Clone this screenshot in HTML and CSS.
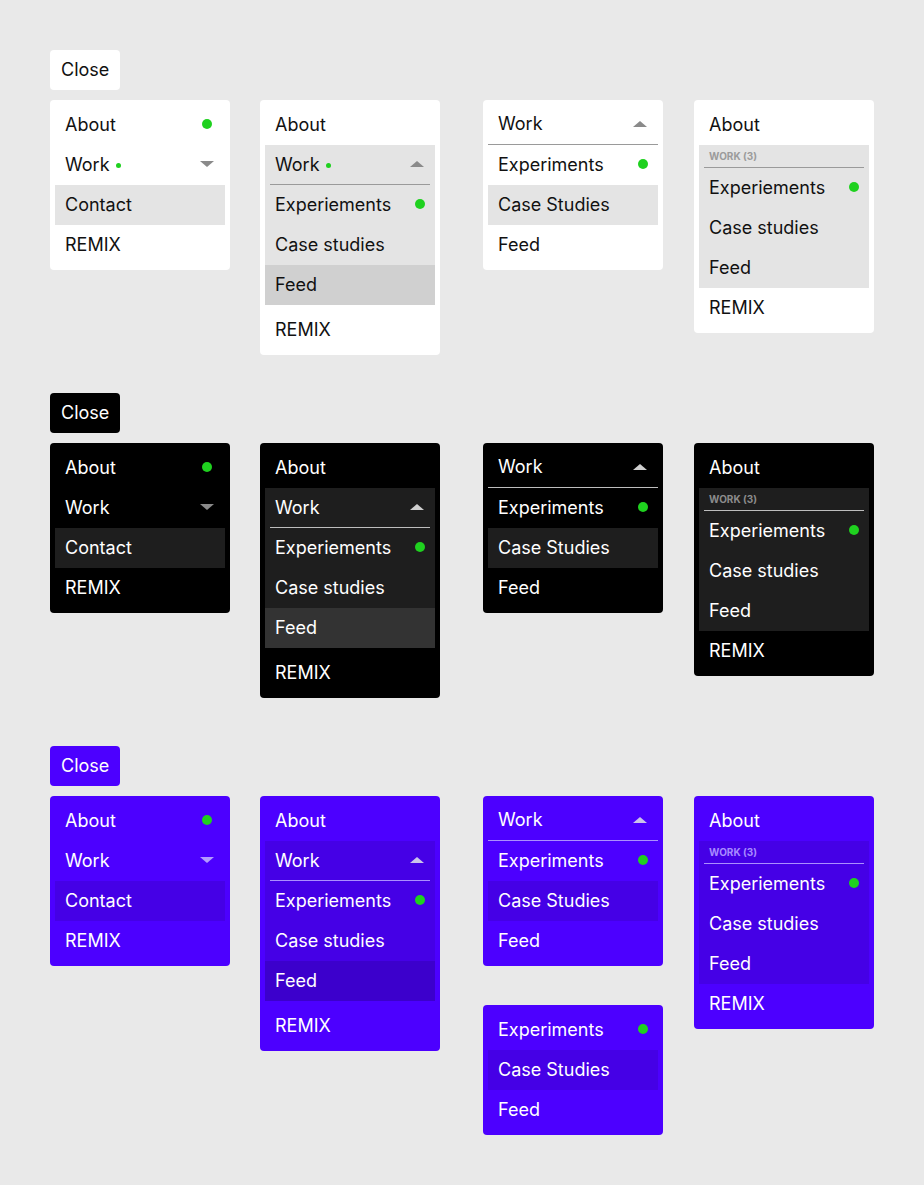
FILE: index.html
```html
<!DOCTYPE html>
<html lang="en">
<head>
    <meta charset="UTF-8">
    <meta name="viewport" content="width=device-width, initial-scale=1.0">
    <title>Menu states</title>
    <link rel="stylesheet" href="styles.css">
</head>
<body>
    <!-- Light theme -->
    <section class="theme theme-light">
        <button class="close-btn">Close</button>
        <div class="menu-row">
            <div class="menu-col">
                <ul class="menu">
                    <li class="menu-item"><span>About</span><span class="dot"></span></li>
                    <li class="menu-item"><span>Work<span class="dot dot-small"></span></span><span class="caret caret-down"></span></li>
                    <li class="menu-item is-hover">Contact</li>
                    <li class="menu-item">REMIX</li>
                </ul>
            </div>
            <div class="menu-col">
                <ul class="menu">
                    <li class="menu-item">About</li>
                    <li class="menu-group">
                        <div class="menu-item group-head"><span>Work<span class="dot dot-small"></span></span><span class="caret caret-up"></span></div>
                        <ul class="submenu">
                            <li class="menu-item"><span>Experiements</span><span class="dot"></span></li>
                            <li class="menu-item">Case studies</li>
                            <li class="menu-item is-hover">Feed</li>
                        </ul>
                    </li>
                    <li class="menu-item">REMIX</li>
                </ul>
            </div>
            <div class="menu-col">
                <ul class="menu">
                    <li class="menu-item section-head"><span>Work</span><span class="caret caret-up"></span></li>
                    <li class="menu-item"><span>Experiments</span><span class="dot"></span></li>
                    <li class="menu-item is-hover">Case Studies</li>
                    <li class="menu-item">Feed</li>
                </ul>
            </div>
            <div class="menu-col">
                <ul class="menu">
                    <li class="menu-item">About</li>
                    <li class="menu-group group-labelled">
                        <div class="group-label">Work (3)</div>
                        <ul class="submenu">
                            <li class="menu-item"><span>Experiements</span><span class="dot"></span></li>
                            <li class="menu-item">Case studies</li>
                            <li class="menu-item">Feed</li>
                        </ul>
                    </li>
                    <li class="menu-item">REMIX</li>
                </ul>
            </div>
        </div>
    </section>

    <!-- Dark theme -->
    <section class="theme theme-dark">
        <button class="close-btn">Close</button>
        <div class="menu-row">
            <div class="menu-col">
                <ul class="menu">
                    <li class="menu-item"><span>About</span><span class="dot"></span></li>
                    <li class="menu-item"><span>Work</span><span class="caret caret-down"></span></li>
                    <li class="menu-item is-hover">Contact</li>
                    <li class="menu-item">REMIX</li>
                </ul>
            </div>
            <div class="menu-col">
                <ul class="menu">
                    <li class="menu-item">About</li>
                    <li class="menu-group">
                        <div class="menu-item group-head"><span>Work</span><span class="caret caret-up"></span></div>
                        <ul class="submenu">
                            <li class="menu-item"><span>Experiements</span><span class="dot"></span></li>
                            <li class="menu-item">Case studies</li>
                            <li class="menu-item is-hover">Feed</li>
                        </ul>
                    </li>
                    <li class="menu-item">REMIX</li>
                </ul>
            </div>
            <div class="menu-col">
                <ul class="menu">
                    <li class="menu-item section-head"><span>Work</span><span class="caret caret-up"></span></li>
                    <li class="menu-item"><span>Experiments</span><span class="dot"></span></li>
                    <li class="menu-item is-hover">Case Studies</li>
                    <li class="menu-item">Feed</li>
                </ul>
            </div>
            <div class="menu-col">
                <ul class="menu">
                    <li class="menu-item">About</li>
                    <li class="menu-group group-labelled">
                        <div class="group-label">Work (3)</div>
                        <ul class="submenu">
                            <li class="menu-item"><span>Experiements</span><span class="dot"></span></li>
                            <li class="menu-item">Case studies</li>
                            <li class="menu-item">Feed</li>
                        </ul>
                    </li>
                    <li class="menu-item">REMIX</li>
                </ul>
            </div>
        </div>
    </section>

    <!-- Brand theme -->
    <section class="theme theme-brand">
        <button class="close-btn">Close</button>
        <div class="menu-row">
            <div class="menu-col">
                <ul class="menu">
                    <li class="menu-item"><span>About</span><span class="dot"></span></li>
                    <li class="menu-item"><span>Work</span><span class="caret caret-down"></span></li>
                    <li class="menu-item is-hover">Contact</li>
                    <li class="menu-item">REMIX</li>
                </ul>
            </div>
            <div class="menu-col">
                <ul class="menu">
                    <li class="menu-item">About</li>
                    <li class="menu-group">
                        <div class="menu-item group-head"><span>Work</span><span class="caret caret-up"></span></div>
                        <ul class="submenu">
                            <li class="menu-item"><span>Experiements</span><span class="dot"></span></li>
                            <li class="menu-item">Case studies</li>
                            <li class="menu-item is-hover">Feed</li>
                        </ul>
                    </li>
                    <li class="menu-item">REMIX</li>
                </ul>
            </div>
            <div class="menu-col">
                <ul class="menu">
                    <li class="menu-item section-head"><span>Work</span><span class="caret caret-up"></span></li>
                    <li class="menu-item"><span>Experiments</span><span class="dot"></span></li>
                    <li class="menu-item is-hover">Case Studies</li>
                    <li class="menu-item">Feed</li>
                </ul>
                <ul class="menu">
                    <li class="menu-item"><span>Experiments</span><span class="dot"></span></li>
                    <li class="menu-item is-hover">Case Studies</li>
                    <li class="menu-item">Feed</li>
                </ul>
            </div>
            <div class="menu-col">
                <ul class="menu">
                    <li class="menu-item">About</li>
                    <li class="menu-group group-labelled">
                        <div class="group-label">Work (3)</div>
                        <ul class="submenu">
                            <li class="menu-item"><span>Experiements</span><span class="dot"></span></li>
                            <li class="menu-item">Case studies</li>
                            <li class="menu-item">Feed</li>
                        </ul>
                    </li>
                    <li class="menu-item">REMIX</li>
                </ul>
            </div>
        </div>
    </section>
</body>
</html>
```

FILE: styles.css
```css
* {
    box-sizing: border-box;
    margin: 0;
    padding: 0;
}

body {
    font-family: 'Inter', 'Liberation Sans', sans-serif;
    background: #e9e9e9;
    padding: 50px;
    font-size: 18px;
}

ul {
    list-style: none;
}

/* Theme colours */
.theme-light {
    --menu-bg: #ffffff;
    --text: #111111;
    --hover: #e4e4e4;
    --group: #e4e4e4;
    --group-hover: #d0d0d0;
    --line: #9a9a9a;
    --caret: #8a8a8a;
    --caret-open: #8a8a8a;
    --label: #9b9b9b;
    margin-bottom: 38px;
}

.theme-dark {
    --menu-bg: #000000;
    --text: #ffffff;
    --hover: #1e1e1e;
    --group: #1e1e1e;
    --group-hover: #333333;
    --line: #bdbdbd;
    --caret: #8a8a8a;
    --caret-open: #cfcfcf;
    --label: #8c8c8c;
    margin-bottom: 48px;
}

.theme-brand {
    --menu-bg: #4c00ff;
    --text: #ffffff;
    --hover: #4500e6;
    --group: #4500e6;
    --group-hover: #3c00cc;
    --line: #ab8fff;
    --caret: #b39bff;
    --caret-open: #cac3ea;
    --label: #a88bff;
}

.close-btn {
    display: block;
    height: 40px;
    padding: 0 11px 2px;
    border: none;
    border-radius: 4px;
    background: var(--menu-bg);
    color: var(--text);
    font-family: inherit;
    font-size: 18px;
}

.menu-row {
    display: grid;
    grid-template-columns: 210px 223px 211px 180px;
    align-items: start;
    margin-top: 10px;
}

.menu-col {
    display: flex;
    flex-direction: column;
    gap: 39px;
    width: 180px;
}

.menu {
    background: var(--menu-bg);
    color: var(--text);
    border-radius: 4px;
    padding: 5px;
}

.menu-item {
    display: flex;
    align-items: center;
    justify-content: space-between;
    height: 40px;
    padding: 0 11px 2px 10px;
}

.menu-item.is-hover {
    background: var(--hover);
}

.menu-group {
    background: var(--group);
    margin-bottom: 5px;
}

.menu-group .menu-item.is-hover {
    background: var(--group-hover);
}

.group-head {
    position: relative;
}

.group-head::after {
    content: "";
    position: absolute;
    left: 5px;
    right: 5px;
    bottom: 0;
    height: 1px;
    background: var(--line);
}

.section-head {
    border-bottom: 1px solid var(--line);
}

.group-labelled {
    margin-bottom: 0;
}

.group-label {
    height: 23px;
    margin: 0 5px;
    padding: 0 5px;
    display: flex;
    align-items: center;
    border-bottom: 1px solid var(--line);
    font-size: 10px;
    font-weight: 700;
    text-transform: uppercase;
    color: var(--label);
}

.dot {
    display: inline-block;
    width: 10px;
    height: 10px;
    margin-right: -1px;
    border-radius: 50%;
    background: #1fd11f;
}

.menu-col:first-child .dot {
    margin-right: 2px;
}

.menu-col:first-child .dot-small,
.dot-small {
    width: 5px;
    height: 5px;
    margin: 0 0 0 6px;
    vertical-align: middle;
}

.caret {
    width: 0;
    height: 0;
    border-left: 7px solid transparent;
    border-right: 7px solid transparent;
}

.caret-down {
    border-top: 6px solid var(--caret);
}

.caret-up {
    border-bottom: 6px solid var(--caret-open);
}
```
